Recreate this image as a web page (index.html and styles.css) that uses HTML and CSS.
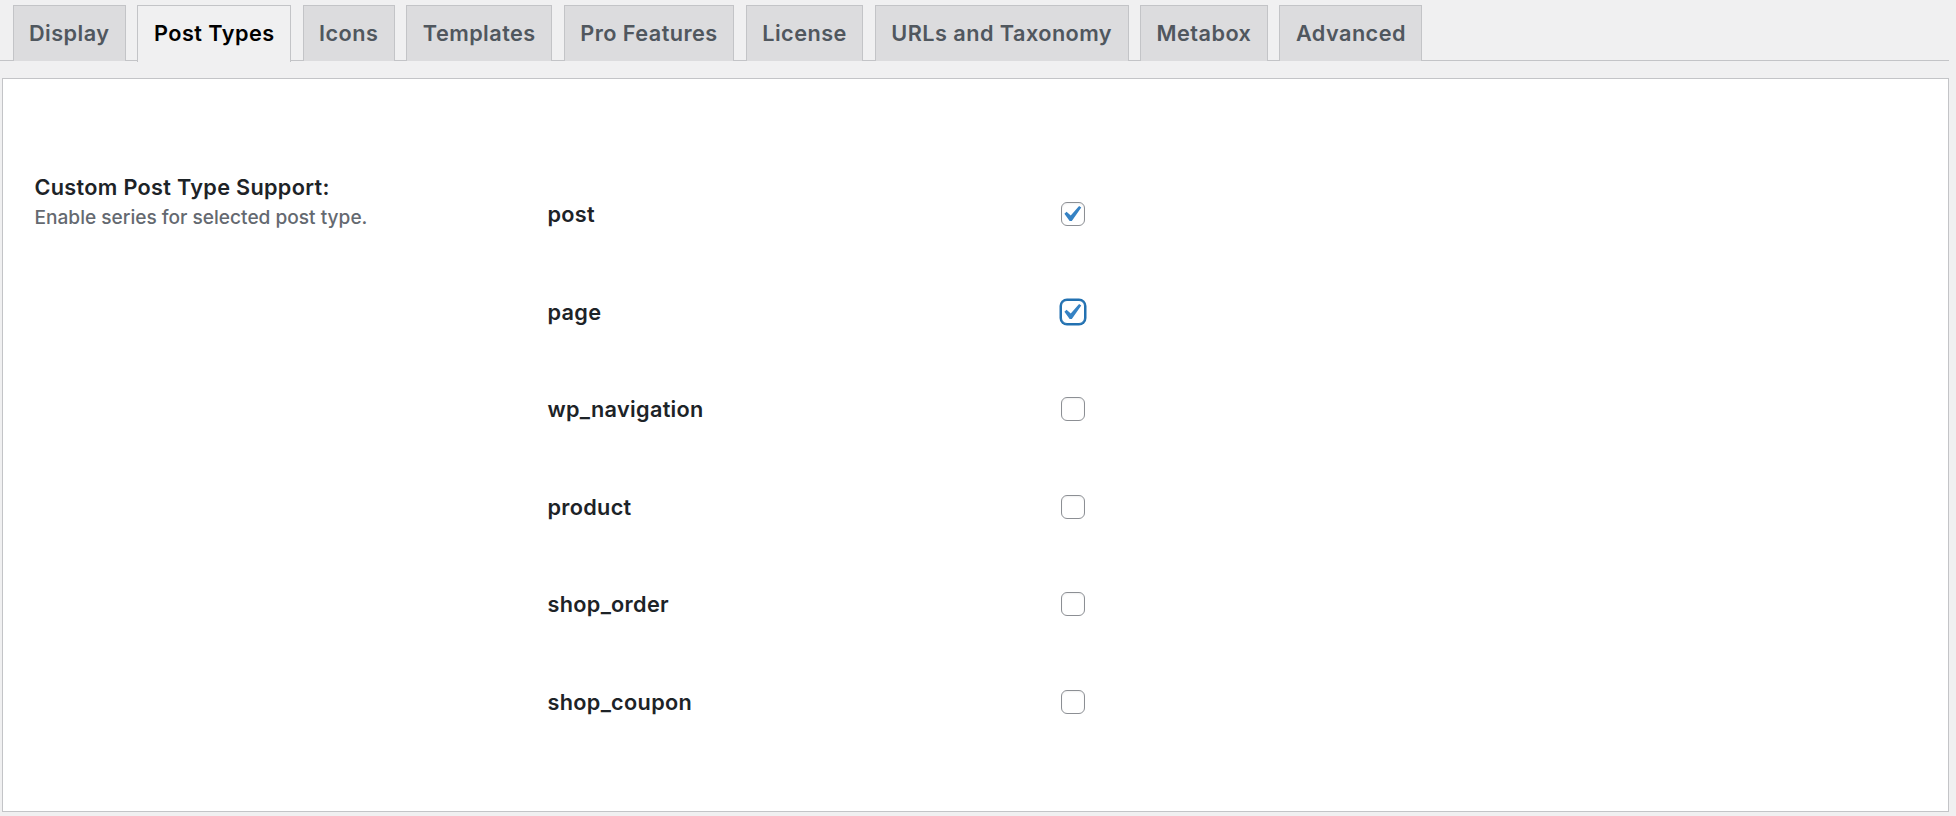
FILE: index.html
```html
<!DOCTYPE html>
<html lang="en">
<head>
<meta charset="utf-8">
<title>Post Types</title>
<link rel="stylesheet" href="styles.css">
</head>
<body>
<div class="tabs">
  <a class="tab">Display</a>
  <a class="tab active">Post Types</a>
  <a class="tab">Icons</a>
  <a class="tab">Templates</a>
  <a class="tab">Pro Features</a>
  <a class="tab">License</a>
  <a class="tab">URLs and Taxonomy</a>
  <a class="tab">Metabox</a>
  <a class="tab">Advanced</a>
</div>
<div class="panel">
  <div class="setting">
    <div class="setting-label">
      <div class="title">Custom Post Type Support:</div>
      <div class="desc">Enable series for selected post type.</div>
    </div>
    <div class="options">
      <div class="option"><span class="opt-name">post</span><span class="cb"><svg class="check" viewBox="0 0 20 20"><path d="M14.83 4.89l1.34.94-5.81 8.38H9.02L5.78 9.67l1.34-1.25 2.57 2.4z"/></svg></span></div>
      <div class="option"><span class="opt-name">page</span><span class="cb focus"><svg class="check" viewBox="0 0 20 20"><path d="M14.83 4.89l1.34.94-5.81 8.38H9.02L5.78 9.67l1.34-1.25 2.57 2.4z"/></svg></span></div>
      <div class="option"><span class="opt-name">wp_navigation</span><span class="cb"></span></div>
      <div class="option"><span class="opt-name">product</span><span class="cb"></span></div>
      <div class="option"><span class="opt-name">shop_order</span><span class="cb"></span></div>
      <div class="option"><span class="opt-name">shop_coupon</span><span class="cb"></span></div>
    </div>
  </div>
</div>
</body>
</html>
```
FILE: styles.css
```css
* { box-sizing: border-box; }
html, body { margin: 0; padding: 0; }
body {
  background: #f0f0f1;
  font-family: Inter, "Liberation Sans", sans-serif;
  color: #1d2327;
  height: 816px;
  overflow: hidden;
}
.tabs {
  display: flex;
  gap: 11.5px;
  padding: 4.7px 0 0 12.5px;
  margin-right: 7px;
  border-bottom: 1px solid #c3c4c7;
  height: 61.2px;
  align-items: flex-start;
}
.tab {
  display: block;
  background: #dcdcde;
  color: #50575e;
  border: 1.5px solid #c3c4c7;
  border-bottom: none;
  font-size: 21.7px;
  font-weight: 600;
  line-height: 37px;
  padding: 9px 15.5px 8.5px;
  height: 56px;
  white-space: nowrap;
  letter-spacing: 0.45px;
}
.tab.active {
  background: #f0f0f1;
  color: #000;
  height: 57px;
}
.panel {
  margin: 17px 7px 0 2px;
  background: #fff;
  border: 1.5px solid #c3c4c7;
  padding: 86.2px 0 60.8px 31.5px;
}
.setting {
  display: grid;
  grid-template-columns: 513px 1fr;
}
.setting-label { padding-top: 7.3px; }
.title {
  font-size: 21.7px;
  font-weight: 600;
  line-height: 28px;
  color: #1d2327;
  letter-spacing: 0.3px;
}
.desc {
  font-size: 19.1px;
  font-weight: 500;
  line-height: 28px;
  color: #646970;
  margin-top: 2.5px;
}
.options { display: flex; flex-direction: column; }
.option {
  display: grid;
  grid-template-columns: 513px 24px;
  align-items: center;
  height: 97.5px;
}
.opt-name {
  font-size: 21.7px;
  font-weight: 600;
  color: #1d2327;
  letter-spacing: 0.3px;
}
.cb {
  display: block;
  width: 24px;
  height: 24px;
  border: 1.5px solid #8c8f94;
  border-radius: 6px;
  background: #fff;
  box-shadow: inset 0 1px 2px rgba(0,0,0,0.06);
}
.cb.focus {
  border-color: #2271b1;
  box-shadow: 0 0 0 1.5px #2271b1;
}
.check {
  display: block;
  width: 32.5px;
  height: 32.5px;
  margin: -4.65px 0 0 -6.2px;
  fill: #3582c4;
}
```
